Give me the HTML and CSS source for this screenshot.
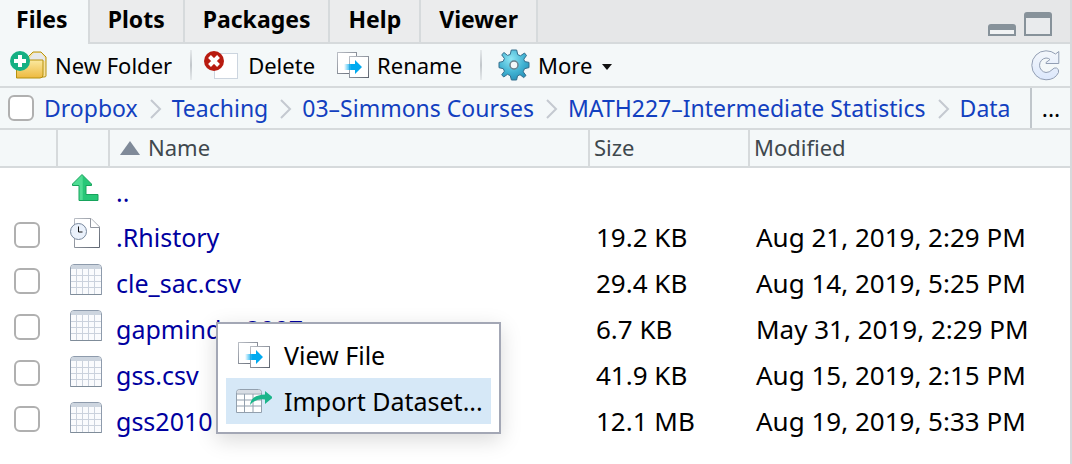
FILE: index.html
```html
<!DOCTYPE html>
<html lang="en">
<head>
<meta charset="utf-8">
<title>Files</title>
<link rel="stylesheet" href="styles.css">
</head>
<body>
<svg class="defs" aria-hidden="true">
  <defs>
    <linearGradient id="g-folder" x1="0" y1="0" x2="0" y2="1"><stop offset="0" stop-color="#fbe9a0"/><stop offset="1" stop-color="#edb93f"/></linearGradient>
    <radialGradient id="g-gear" cx=".4" cy=".3" r=".75"><stop offset="0" stop-color="#8fe6f4"/><stop offset=".6" stop-color="#41b2d2"/><stop offset="1" stop-color="#2590b8"/></radialGradient>
    <linearGradient id="g-arrow" x1="0" y1="0" x2="1" y2="0"><stop offset="0" stop-color="#00aaf0" stop-opacity="0"/><stop offset=".4" stop-color="#00aaf0"/></linearGradient>
    <linearGradient id="g-edge" x1="0" y1="0" x2="1" y2="1"><stop offset="0" stop-color="#bcc0c7"/><stop offset="1" stop-color="#5d6470"/></linearGradient>
    <linearGradient id="g-up" x1="0" y1="0" x2="1" y2="0"><stop offset="0" stop-color="#4fdc93"/><stop offset=".38" stop-color="#4fdc93"/><stop offset=".42" stop-color="#27c777"/><stop offset="1" stop-color="#27c777"/></linearGradient>
    <linearGradient id="g-refresh" x1="0" y1="0" x2="0" y2="1"><stop offset="0" stop-color="#f4f7fb"/><stop offset="1" stop-color="#dce8fc"/></linearGradient>
    <symbol id="i-move" viewBox="0 0 32 26">
      <rect x=".5" y=".5" width="19" height="21" fill="#fff" stroke="url(#g-edge)"/>
      <rect x="12.500" y="4.500" width="19" height="21" fill="#fff" stroke="url(#g-edge)"/>
      <path d="M7 12h11V8l7 7-7 7v-4H7z" fill="url(#g-arrow)"/>
    </symbol>
    <symbol id="i-sheet" viewBox="0 0 32 31">
      <path d="M.5 30.500V4Q.5.5 4 .5h24q3.500 0 3.500 3.500v26.500z" fill="#fafbfd" stroke="#8e9bac"/>
      <path d="M1 5V4q0-3 3-3h24q3 0 3 3v1z" fill="#cdd5df"/>
      <path d="M6.500 5v25M12.500 5v25M18.500 5v25M24.500 5v25M1 11.500h30M1 17.500h30M1 23.500h30" stroke="#cbd2dd"/>
      <path d="M.5 30.500h31" stroke="#7f8c99"/>
    </symbol>
  </defs>
</svg>
<main class="pane">
  <header class="tabbar">
    <nav class="tabs" role="tablist">
      <button class="tab active" role="tab" aria-selected="true">Files</button>
      <button class="tab" role="tab">Plots</button>
      <button class="tab" role="tab">Packages</button>
      <button class="tab" role="tab">Help</button>
      <button class="tab" role="tab">Viewer</button>
    </nav>
    <div class="window-buttons">
      <button aria-label="Minimize"><svg width="28" height="24" viewBox="0 0 28 24"><path d="M1 17v6h26v-6" fill="#f1f3f4" stroke="#87929a" stroke-width="2"/><path d="M0 18v-3q0-3 3-3h22q3 0 3 3v3z" fill="#87929a"/></svg></button>
      <button aria-label="Maximize"><svg width="28" height="24" viewBox="0 0 28 24"><path d="M1 4v19h26V4" fill="#e9ebed" stroke="#87929a" stroke-width="2"/><path d="M0 6V3q0-3 3-3h22q3 0 3 3v3z" fill="#87929a"/></svg></button>
    </div>
  </header>

  <div class="toolbar">
    <button class="tool">
      <svg width="37" height="28" viewBox="0 0 37 28">
        <path d="M18 25V6l5-5h8l5 5v19q0 1-2 1H20z" fill="#f7e2a0" stroke="#b6910f"/>
        <path d="M20 7l4-5h7l4 5v3H20z" fill="#e6e8ea"/>
        <path d="M6.500 10.500 8 9h25v15q0 3-3 3H6.500z" fill="url(#g-folder)" stroke="#b6910f"/>
        <circle cx="10" cy="10" r="10" fill="#14b083"/><path d="M10 4v12M4 10h12" stroke="#fff" stroke-width="4"/>
      </svg>New Folder</button>
    <span class="divider"></span>
    <button class="tool delete">
      <svg width="34" height="28" viewBox="0 0 34 28"><rect x="10.500" y="2.500" width="23" height="25" fill="#fff" stroke="#ccd5df"/><circle cx="10" cy="10" r="10" fill="#b81b10"/><path d="M5.500 5.500l9 9M14.500 5.500l-9 9" stroke="#fff" stroke-width="4"/></svg>Delete</button>
    <button class="tool rename"><svg width="32" height="26"><use href="#i-move"/></svg>Rename</button>
    <span class="divider"></span>
    <button class="tool more">
      <svg width="32" height="32" viewBox="-16 -16 32 32">
        <path d="M-2.700-15 2.700-15 3.700-10.400 6.500-9.200 10.500-12 12.500-9.500 9.800-5.800 10.700-3.400 15-2.600 15 2.600 10.500 3.700 9.200 6.800 12 10.500 9.700 12.600 6 9.700 3.500 10.900 2.600 15-2.600 15-3.700 10.700-6.500 9.300-10.300 12-12.300 9.800-9.600 6.200-10.700 3.700-15 2.700-15-2.600-10.800-3.600-9.600-6.500-12.300-10.200-10-12.500-6.500-9.600-3.800-10.500z" fill="url(#g-gear)" stroke="#356f8d" stroke-linejoin="round"/>
        <circle r="4" fill="#f4f8f9" stroke="#68818d" stroke-width="1.500"/>
      </svg>More<svg class="caret" width="10" height="6" viewBox="0 0 10 6"><path d="M0 0h10L5 6z" fill="#111"/></svg></button>
    <button class="refresh" aria-label="Refresh">
      <svg width="29" height="31" viewBox="0 0 29 31"><path d="M24.500 4Q20.500.8 15 .8A14.200 14.500 0 0 0 15 29.800Q24 29.800 27.500 22.500Q28.300 19 25.500 18Q23 17.300 21 19.800Q18.500 22.500 15 22.500A7.300 7.300 0 0 1 15 8Q17.500 8 19 9.500L15 12.500V13.500H27.800V1.500z" fill="url(#g-refresh)" stroke="#929eb3" stroke-linejoin="round"/></svg>
    </button>
  </div>

  <nav class="path">
    <input type="checkbox" aria-label="Select all">
    <a href="#">Dropbox</a><svg class="chev" width="12" height="20" viewBox="0 0 12 20"><path d="M1 1l9 9-9 9"/></svg>
    <a href="#">Teaching</a><svg class="chev" width="12" height="20" viewBox="0 0 12 20"><path d="M1 1l9 9-9 9"/></svg>
    <a href="#">03–Simmons Courses</a><svg class="chev" width="12" height="20" viewBox="0 0 12 20"><path d="M1 1l9 9-9 9"/></svg>
    <a href="#">MATH227–Intermediate Statistics</a><svg class="chev" width="12" height="20" viewBox="0 0 12 20"><path d="M1 1l9 9-9 9"/></svg>
    <a href="#">Data</a>
    <button class="browse" aria-label="Go to directory">...</button>
  </nav>

  <table class="files">
    <colgroup><col class="c-check"><col class="c-icon"><col><col class="c-size"><col class="c-date"></colgroup>
    <thead><tr><th></th><th></th><th><svg class="sort" width="20" height="14" viewBox="0 0 20 14"><path d="M10 0l10 14H0z" fill="#7f8a99"/></svg>Name</th><th>Size</th><th>Modified</th></tr></thead>
    <tbody>
      <tr class="up"><td></td><td><svg width="27" height="27" viewBox="0 0 27 27"><path d="M10 .5 19.500 10v1.500H14v9h12v6H7v-15H.5V10z" fill="url(#g-up)" stroke="#17a35c"/></svg></td><td><a href="#">..</a></td><td></td><td></td></tr>
      <tr><td><input type="checkbox" aria-label=".Rhistory"></td><td><svg width="31" height="31" viewBox="0 0 31 31"><path d="M4.500.5H21l8.500 8.500v20.500h-25z" fill="#fff" stroke="url(#g-edge)"/><path d="M20.500.5V9.500h9" fill="#fff" stroke="#9297a0"/><circle cx="8.500" cy="13.500" r="8" fill="#eaf1fb" stroke="#78889d"/><path d="M8.500 8.500v5.500h4" fill="none" stroke="#111"/></svg></td><td><a href="#">.Rhistory</a></td><td>19.2 KB</td><td>Aug 21, 2019, 2:29 PM</td></tr>
      <tr><td><input type="checkbox" aria-label="cle_sac.csv"></td><td><svg width="32" height="31"><use href="#i-sheet"/></svg></td><td><a href="#">cle_sac.csv</a></td><td>29.4 KB</td><td>Aug 14, 2019, 5:25 PM</td></tr>
      <tr><td><input type="checkbox" aria-label="gapminder2007"></td><td><svg width="32" height="31"><use href="#i-sheet"/></svg></td><td><a href="#">gapminder2007</a></td><td>6.7 KB</td><td>May 31, 2019, 2:29 PM</td></tr>
      <tr><td><input type="checkbox" aria-label="gss.csv"></td><td><svg width="32" height="31"><use href="#i-sheet"/></svg></td><td><a href="#">gss.csv</a></td><td>41.9 KB</td><td>Aug 15, 2019, 2:15 PM</td></tr>
      <tr><td><input type="checkbox" aria-label="gss2010"></td><td><svg width="32" height="31"><use href="#i-sheet"/></svg></td><td><a href="#">gss2010</a></td><td>12.1 MB</td><td>Aug 19, 2019, 5:33 PM</td></tr>
    </tbody>
  </table>

  <div class="menu" role="menu">
    <button role="menuitem"><svg width="36" height="26" viewBox="0 0 36 26"><use href="#i-move" x="2" width="32" height="26"/></svg>View File</button>
    <button role="menuitem" class="selected"><svg width="36" height="26" viewBox="0 0 36 26"><path d="M.5 24.500V4.500q0-3 3-3h19q3 0 3 3v20z" fill="#fff" stroke="#93a0ae"/><path d="M1 5.500V5q0-3 3-3h18q3 0 3 3v.5z" fill="#d8dde4"/><path d="M.5 6h25M.5 12h25M.5 18h25M8.500 6v18M17 6v18" stroke="#93a0ae"/><path d="M14 17Q15 7 29 6.500V3l8 6.500-8 6.500v-4.500Q19 10.500 14 17z" fill="#1ab58a"/></svg>Import Dataset...</button>
  </div>
</main>
</body>
</html>
```
FILE: styles.css
```css
* { box-sizing: border-box; }
body { margin: 0; background: #fff; color: #000; font: 22px/32px "Noto Sans", "Open Sans", sans-serif; }
button { margin: 0; padding: 0; border: 0; background: none; color: inherit; font: inherit; white-space: nowrap; }
a { color: inherit; text-decoration: none; }
svg { display: block; flex: none; }
.defs { position: absolute; width: 0; height: 0; }
.pane { position: relative; min-height: 100vh; border-right: 2px solid #d6dadc; overflow: hidden; }

.tabbar { display: flex; justify-content: space-between; height: 44px; background: #e6e7e8; box-shadow: inset 0 -2px #d6dadc; }
.tabs { display: flex; }
.tab { padding: 0 18px 4px; border-right: 2px solid #d6dadc; border-bottom: 2px solid #d6dadc; background: #ebeced; font-size: 23px; font-weight: 700; }
.tab.active { padding: 0 20px 6px 16px; border-bottom: 0; background: #f4f8f9; }
.window-buttons { display: flex; gap: 8px; padding: 12px 18px 0 0; align-items: flex-start; }

.toolbar { display: flex; align-items: center; height: 44px; padding: 0 10px; border-bottom: 2px solid #d6dadc; background: #f4f8f9; }
.tool { display: flex; align-items: center; gap: 8px; }
.divider { width: 2px; height: 30px; margin: 0 12px 0 18px; background: linear-gradient(#e6eaec, #c2c7cb, #e6eaec); }
.delete { gap: 10px; }
.rename { margin-left: 22px; }
.more { margin-left: 4px; }
.caret { margin: 4px 0 0 2px; }
.refresh { margin-left: auto; }

.path { display: flex; align-items: center; height: 42px; padding-left: 8px; border-bottom: 2px solid #d6dadc; background: #f4f8f9; color: #1240c0; font-size: 23px; white-space: nowrap; }
.path a { margin-left: 10px; }
.chev { margin: 2px 0 0 12px; fill: none; stroke: #c4c9d0; stroke-width: 2; }
.browse { flex: none; align-self: stretch; width: 40px; margin-left: auto; border-left: 2px solid #c0c6cb; color: #000; }
input { appearance: none; flex: none; display: block; width: 26px; height: 26px; margin: 0; border: 2px solid #b0b0b0; border-radius: 6px; background: #fff; }

.files { width: 100%; table-layout: fixed; border-collapse: separate; border-spacing: 0; }
.c-check { width: 58px; }
.c-icon { width: 52px; }
.c-size { width: 160px; }
.c-date { width: 320px; }
th { height: 38px; padding: 0 4px 2px; border-right: 2px solid #d6dadc; border-bottom: 2px solid #d6dadc; background: #f4f8f9; color: #3f484e; font-weight: 400; text-align: left; }
th:last-child { border-right: 0; }
.sort { display: inline-block; margin: 0 8px 1px 6px; }
td { height: 46px; padding: 3px 6px 0; font-size: 26px; white-space: nowrap; }
td:first-child { padding: 0 14px; }
td:nth-child(2) { padding: 0 12px 4px; }
td a { color: #0000a0; font-size: 25px; }
.up td { height: 44px; }
.up td:nth-child(2) { padding: 0 14px 6px; }

.menu { position: absolute; left: 216px; top: 322px; padding: 8px; border: 2px solid #a3a7b5; background: #fff; font-size: 25px; box-shadow: 0 6px 20px rgba(0, 0, 0, .15); }
.menu button { display: flex; align-items: center; gap: 12px; width: 100%; height: 46px; padding: 0 8px 0 10px; }
.menu .selected { background: #d6e8f7; }
```
